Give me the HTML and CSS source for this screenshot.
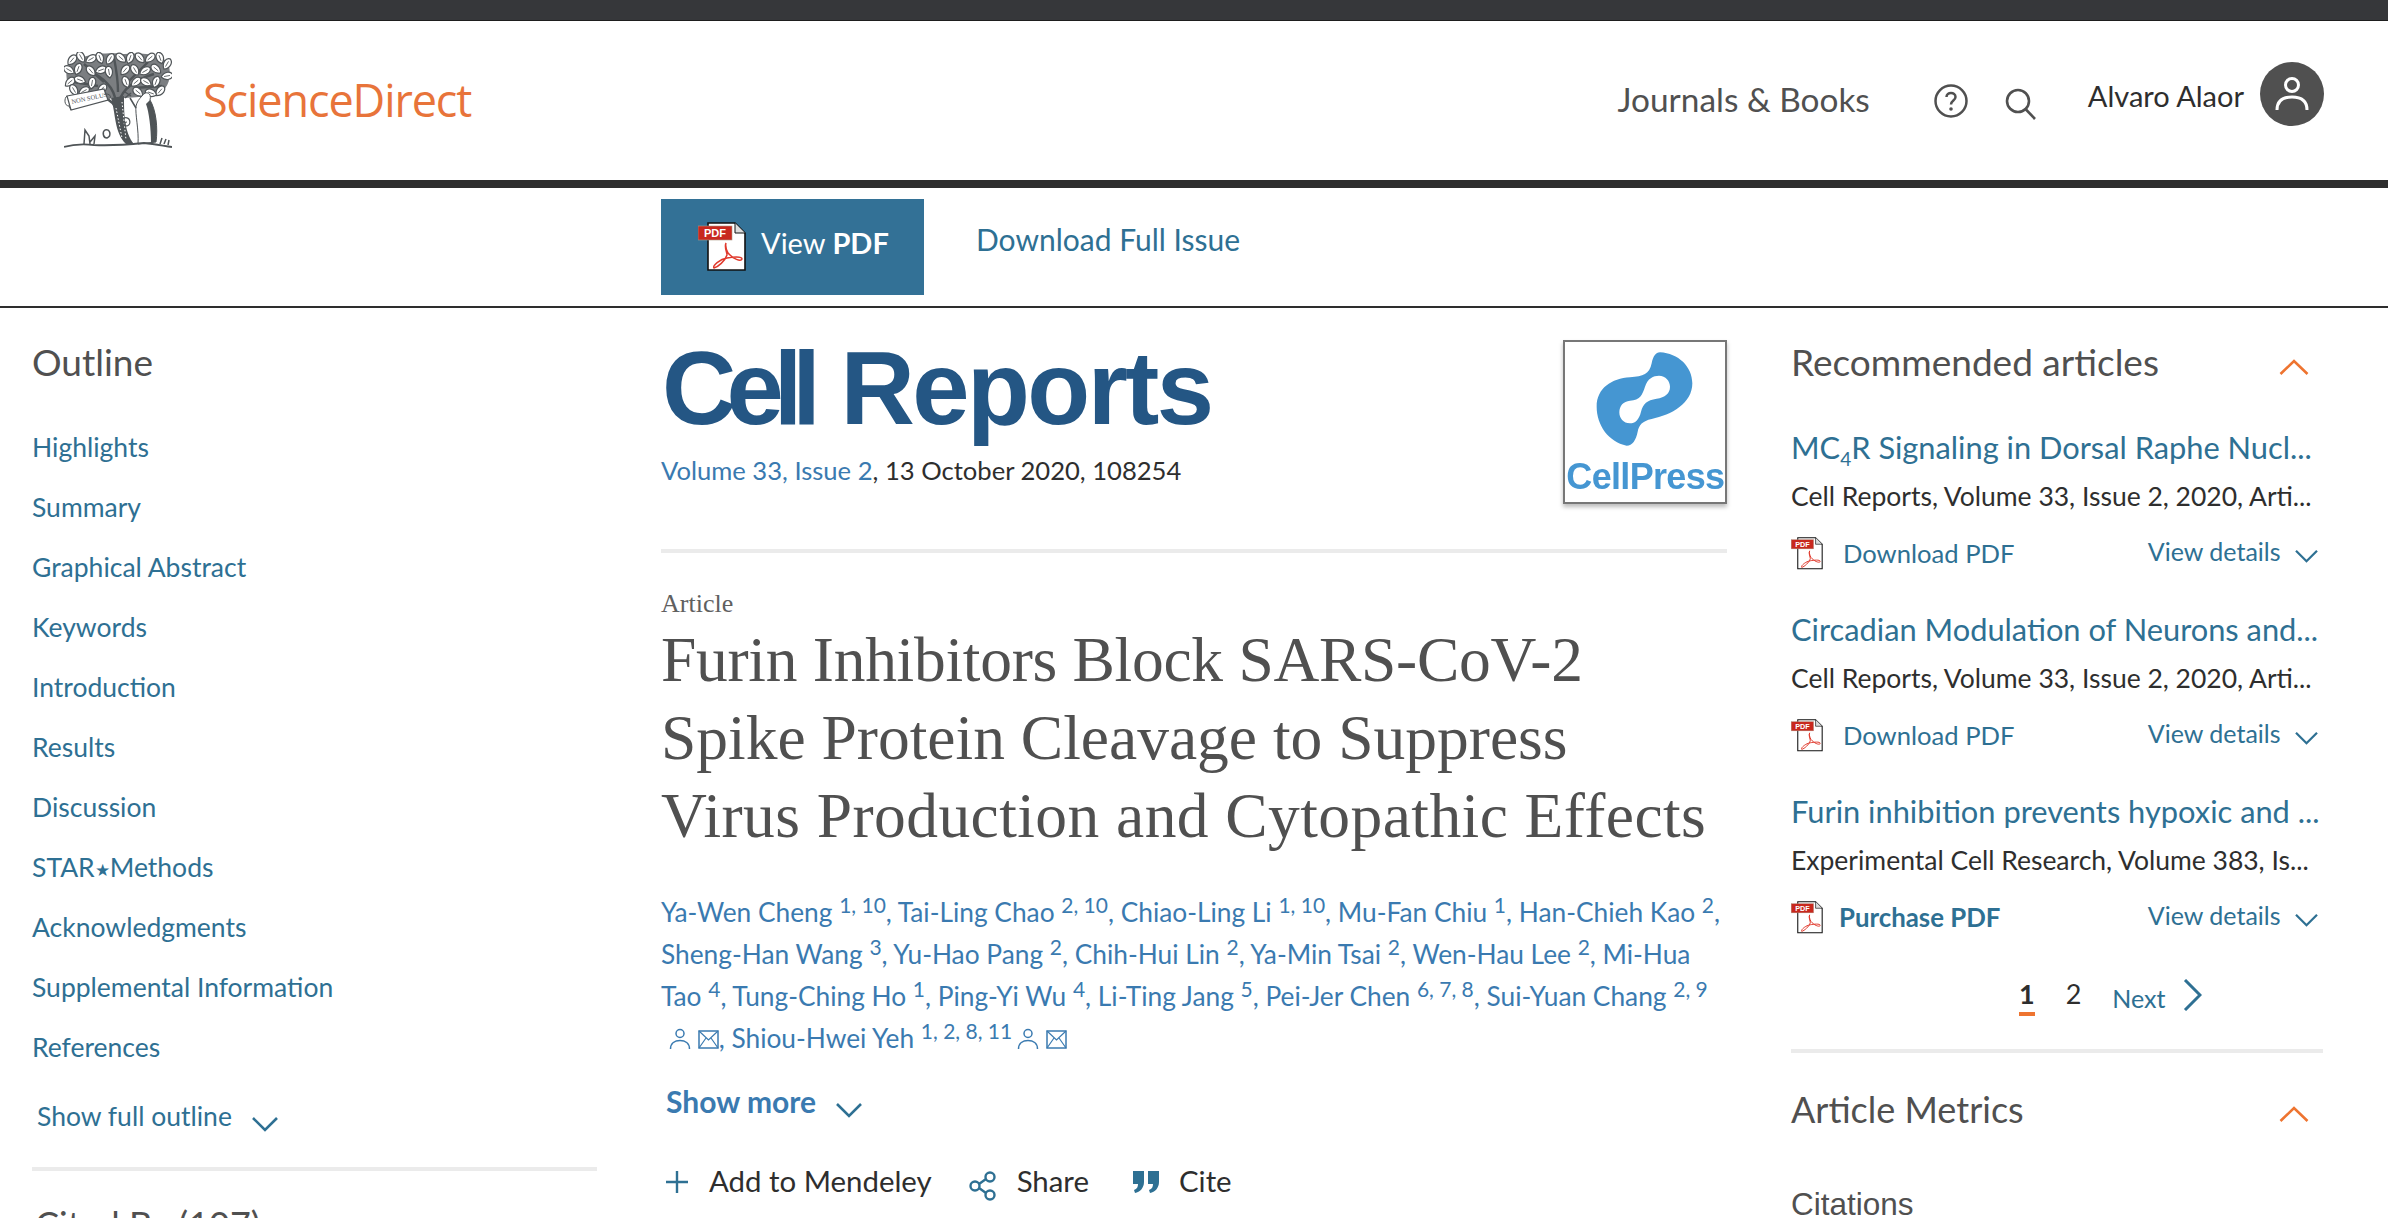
FILE: index.html
```html
<!DOCTYPE html>
<html lang="en">
<head>
<meta charset="utf-8">
<title>Furin Inhibitors Block SARS-CoV-2 Spike Protein Cleavage - ScienceDirect</title>
<link rel="stylesheet" href="styles.css">
</head>
<body>
<svg class="defs" width="0" height="0">
  <defs>
    <symbol id="pdf" viewBox="0 0 48 50">
      <path d="M10 1H37L47 11V48H10Z" fill="#fff" stroke="#111" stroke-width="1.6"/>
      <path d="M37 1V11H47" fill="#ddd" stroke="#111" stroke-width="1"/>
      <rect x="0" y="4" width="34" height="14" fill="#c8281e" stroke="#a98" stroke-width=".6"/>
      <text x="17" y="15" class="pdf-tag">PDF</text>
      <path d="M28 21C26 25 29 30 29 33C27 39 20 45 16 46C14 44 22 37 29 36C34 35 44 34 44 37C43 40 35 37 30 31C28 27 27 24 28 21Z" fill="none" stroke="#e0392c" stroke-width="1.5"/>
    </symbol>
    <symbol id="down" viewBox="0 0 28 16"><path d="M2 2L14 14L26 2" fill="none" stroke="#2e7093" stroke-width="2.6"/></symbol>
    <symbol id="up" viewBox="0 0 30 16"><path d="M1.5 15L15 2L28.500 15" fill="none" stroke="#ee7430" stroke-width="2.6"/></symbol>
    <symbol id="person" viewBox="0 0 22 22"><circle cx="11" cy="5.500" r="4" fill="none" stroke="#3a7ab0" stroke-width="1.500"/><path d="M1.500 21C1.500 15 6 12.500 11 12.500S20.500 15 20.500 21" fill="none" stroke="#3a7ab0" stroke-width="1.500"/></symbol>
    <symbol id="mail" viewBox="0 0 21 19"><rect x="1" y="1" width="19" height="17" fill="none" stroke="#3a7ab0" stroke-width="1.500"/><path d="M1 1L10.500 10L20 1M1 18L8 8M20 18L13 8" fill="none" stroke="#3a7ab0" stroke-width="1.200"/></symbol>
    <g id="lf"><path d="M0-6C4-5 5.500 1.500 0 6C-5.500 1.500-4-5 0-6Z" fill="#fff" stroke="#4f5457" stroke-width="1.200"/><path d="M0-3V3" stroke="#4f5457" stroke-width=".8"/></g>
  </defs>
</svg>

<div class="topbar"></div>

<header class="site-header">
  <a class="brand">
    <svg class="tree" viewBox="0 0 108 96" width="108" height="96" role="img" aria-label="Elsevier tree logo">
      <path d="M4 14C14 2 44 0 60 2C84 0 102 3 105 14C108 28 103 42 86 44C66 46 40 48 18 43C6 40-1 28 4 14Z" fill="#7b7e81"/>
      <path d="M53 58C52 40 46 30 28 20M55 50C58 38 70 28 90 22M54 40C54 28 52 16 50 6M30 42C40 44 48 48 52 56M20 12L40 30M84 10L64 30M10 30L34 34M98 34L70 36" fill="none" stroke="#4f5457" stroke-width="2.400"/>
      <use href="#lf" transform="translate(8 8) rotate(40)"/><use href="#lf" transform="translate(17 5) rotate(-30)"/><use href="#lf" transform="translate(27 7) rotate(60)"/><use href="#lf" transform="translate(36 6) rotate(-20)"/><use href="#lf" transform="translate(46 7) rotate(30)"/><use href="#lf" transform="translate(57 6) rotate(-50)"/><use href="#lf" transform="translate(66 6) rotate(20)"/><use href="#lf" transform="translate(76 6) rotate(-40)"/><use href="#lf" transform="translate(86 6) rotate(50)"/><use href="#lf" transform="translate(96 6) rotate(-20)"/><use href="#lf" transform="translate(103 12) rotate(30)"/>
      <use href="#lf" transform="translate(5 18) rotate(-60)"/><use href="#lf" transform="translate(14 17) rotate(20)"/><use href="#lf" transform="translate(27 19) rotate(-40)"/><use href="#lf" transform="translate(37 18) rotate(70)"/><use href="#lf" transform="translate(45 20) rotate(-10)"/><use href="#lf" transform="translate(61 18) rotate(40)"/><use href="#lf" transform="translate(71 18) rotate(-30)"/><use href="#lf" transform="translate(81 19) rotate(60)"/><use href="#lf" transform="translate(92 17) rotate(-50)"/><use href="#lf" transform="translate(103 24) rotate(80)"/>
      <use href="#lf" transform="translate(6 30) rotate(50)"/><use href="#lf" transform="translate(16 28) rotate(-70)"/><use href="#lf" transform="translate(28 31) rotate(10)"/><use href="#lf" transform="translate(62 30) rotate(-20)"/><use href="#lf" transform="translate(72 30) rotate(50)"/><use href="#lf" transform="translate(82 30) rotate(-60)"/><use href="#lf" transform="translate(92 30) rotate(20)"/>
      <use href="#lf" transform="translate(10 38) rotate(-30)"/><use href="#lf" transform="translate(20 39) rotate(60)"/><use href="#lf" transform="translate(38 37) rotate(40)"/><use href="#lf" transform="translate(74 40) rotate(-50)"/><use href="#lf" transform="translate(96 39) rotate(40)"/><use href="#lf" transform="translate(87 41) rotate(-70)"/>
      <path d="M47 46C52 62 50 80 62 92L70 92C60 80 60 60 60 44Z" fill="#4f5457"/>
      <path d="M58 50L62 88M52 56L58 86" fill="none" stroke="#fff" stroke-width="1" stroke-dasharray="1.500 2"/>
      <path d="M3 44L40 37L44 48L7 58Z" fill="#fff" stroke="#4f5457" stroke-width="1.200"/>
      <path d="M3 44C0 46 0 54 5 54L7 58M44 48C48 46 47 42 42 42" fill="none" stroke="#4f5457" stroke-width="1"/>
      <text x="8" y="52" transform="rotate(-12 8 52)" class="tree-motto">NON SOLUS</text>
      <path d="M78 44C82 38 88 41 86 48C92 58 94 76 92 90L74 92C75 78 71 62 72 54C73 50 75 47 78 44Z" fill="#fff" stroke="#4f5457" stroke-width="1"/>
      <path d="M86 48C92 58 94 76 92 90L87 91C87 76 85 60 82 52Z" fill="#4f5457"/>
      <path d="M72 56L66 46M61 40L67 44M61 46L67 41" fill="none" stroke="#4f5457" stroke-width="1.500"/>
      <path d="M60 66C66 64 68 72 63 74C60 74 60 70 63 70" fill="none" stroke="#4f5457" stroke-width="1.200"/>
      <path d="M0 95C10 92 20 92 30 93C50 94 70 92 80 91C92 92 100 94 108 95" fill="none" stroke="#4f5457" stroke-width="1.800"/>
      <path d="M20 92L21 78L25 84L26 92M26 90L31 84L30 92M41 78C46 76 48 84 43 86C39 86 38 80 41 78ZM96 92L98 86M100 92L102 87M104 93L105 88" fill="none" stroke="#4f5457" stroke-width="1.500"/>
    </svg>
    <span class="brand-name">ScienceDirect</span>
  </a>
  <nav class="site-nav">
    <a class="nav-journals">Journals &amp; Books</a>
    <svg class="icon-help" viewBox="0 0 34 34" width="34" height="34"><circle cx="17" cy="17" r="15.500" fill="none" stroke="#505050" stroke-width="2.500"/><path d="M12.500 13C12.500 7.500 21.500 7.500 21.500 13C21.500 16.500 17 16.500 17 20.500" fill="none" stroke="#505050" stroke-width="2.500"/><circle cx="17" cy="25" r="1.800" fill="#505050"/></svg>
    <svg class="icon-search" viewBox="0 0 32 32" width="32" height="32"><circle cx="13" cy="13" r="11" fill="none" stroke="#505050" stroke-width="2.600"/><path d="M20.500 21L30 31" stroke="#505050" stroke-width="2.600"/></svg>
    <a class="nav-user">Alvaro Alaor</a>
    <span class="avatar"><svg viewBox="0 0 64 64" width="64" height="64"><circle cx="32" cy="23" r="6.500" fill="none" stroke="#fff" stroke-width="3"/><path d="M17 48C17 38 24 35 32 35S47 38 47 48" fill="none" stroke="#fff" stroke-width="3"/></svg></span>
  </nav>
</header>

<div class="toolbar">
  <a class="btn-pdf"><svg class="btn-pdf-icon" width="48" height="50"><use href="#pdf"/></svg><span class="btn-pdf-label">View <b>PDF</b></span></a>
  <a class="toolbar-link">Download Full Issue</a>
</div>

<main class="layout">
  <aside class="outline">
    <h2 class="side-title">Outline</h2>
    <ul class="outline-list">
      <li>Highlights</li>
      <li>Summary</li>
      <li>Graphical Abstract</li>
      <li>Keywords</li>
      <li>Introduction</li>
      <li>Results</li>
      <li>Discussion</li>
      <li>STAR<span class="star">★</span>Methods</li>
      <li>Acknowledgments</li>
      <li>Supplemental Information</li>
      <li>References</li>
    </ul>
    <a class="show-outline">Show full outline <svg class="chev-outline" width="28" height="16"><use href="#down"/></svg></a>
    <hr class="rule rule-outline">
    <h2 class="side-title cited">Cited By (107)</h2>
  </aside>

  <article class="article">
    <div class="journal">
      <div class="journal-info">
        <div class="journal-name"><span class="jn-cell">Cell</span> <span class="jn-reports">Reports</span></div>
        <p class="journal-issue"><a>Volume 33, Issue 2</a>, 13 October 2020, 108254</p>
      </div>
      <svg class="cover" viewBox="24 15 492 492" width="164" height="164" role="img" aria-label="Cell Press">
        <rect x="27" y="18" width="486" height="486" fill="#fff" stroke="#777" stroke-width="6"/>
        <path fill="#4596d2" fill-rule="evenodd" d="M315 52C370 55 412 95 412 145C412 205 350 240 290 252C262 258 252 270 248 290C243 315 232 332 215 332C160 320 125 270 125 215C125 160 170 130 225 127C265 124 283 118 290 85C294 65 302 52 315 52ZM225 197C255 195 262 180 270 155C278 130 295 122 312 122C332 122 345 138 345 155C345 175 330 187 305 191C275 196 265 205 258 230C252 255 240 265 225 265C205 265 193 250 193 232C193 212 205 199 225 197Z"/>
        <text x="34" y="462" class="cover-text">CellPress</text>
      </svg>
    </div>
    <hr class="rule rule-journal">
    <div class="article-type">Article</div>
    <h1 class="title"><span class="title-a">Furin Inhibitors Block SARS-CoV-2</span><br>Spike Protein Cleavage to Suppress<br><span class="title-c">Virus Production and Cytopathic Effects</span></h1>
    <p class="authors">Ya-Wen Cheng <sup>1, 10</sup>, Tai-Ling Chao <sup>2, 10</sup>, Chiao-Ling Li <sup>1, 10</sup>, Mu-Fan Chiu <sup>1</sup>, Han-Chieh Kao <sup>2</sup>,<br>Sheng-Han Wang <sup>3</sup>, Yu-Hao Pang <sup>2</sup>, Chih-Hui Lin <sup>2</sup>, Ya-Min Tsai <sup>2</sup>, Wen-Hau Lee <sup>2</sup>, Mi-Hua<br>Tao <sup>4</sup>, Tung-Ching Ho <sup>1</sup>, Ping-Yi Wu <sup>4</sup>, Li-Ting Jang <sup>5</sup>, Pei-Jer Chen <sup>6, 7, 8</sup>, Sui-Yuan Chang <sup>2, 9</sup><br><svg class="a-person a-first" width="22" height="22"><use href="#person"/></svg> <svg class="a-mail" width="21" height="19"><use href="#mail"/></svg>, Shiou-Hwei Yeh <sup>1, 2, 8, 11</sup> <svg class="a-person a-second" width="22" height="22"><use href="#person"/></svg> <svg class="a-mail" width="21" height="19"><use href="#mail"/></svg></p>
    <a class="show-more">Show more <svg class="chev-more" width="28" height="16"><use href="#down"/></svg></a>
    <div class="actions">
      <a class="action action-add"><svg width="22" height="22" viewBox="0 0 22 22"><path d="M11 0V22M0 11H22" stroke="#2e7093" stroke-width="2.400"/></svg>Add to Mendeley</a>
      <a class="action action-share"><svg width="28" height="30" viewBox="0 0 28 30"><circle cx="21" cy="6" r="4.500" fill="none" stroke="#2e7093" stroke-width="2.400"/><circle cx="6" cy="15" r="4.500" fill="none" stroke="#2e7093" stroke-width="2.400"/><circle cx="21" cy="24" r="4.500" fill="none" stroke="#2e7093" stroke-width="2.400"/><path d="M10 13L17 8M10 17L17 22" stroke="#2e7093" stroke-width="2.400"/></svg>Share</a>
      <a class="action action-cite"><svg width="26" height="22" viewBox="0 0 26 22"><path d="M0 0H11V11C11 17 7 21 2 22L1 19C4 18 5 16 5 13H0ZM15 0H26V11C26 17 22 21 17 22L16 19C19 18 20 16 20 13H15Z" fill="#2e7093"/></svg>Cite</a>
    </div>
  </article>

  <aside class="recs">
    <div class="rec-head"><h2 class="side-title">Recommended articles</h2><svg class="chev-up" width="30" height="16"><use href="#up"/></svg></div>
    <section class="rec">
      <a class="rec-title">MC<sub>4</sub>R Signaling in Dorsal Raphe Nucl...</a>
      <p class="rec-meta">Cell Reports, Volume 33, Issue 2, 2020, Arti...</p>
      <div class="rec-row"><a class="rec-dl"><svg class="rec-pdf" width="32" height="33"><use href="#pdf"/></svg>Download PDF</a><a class="rec-view">View details <svg width="25" height="14"><use href="#down"/></svg></a></div>
    </section>
    <section class="rec">
      <a class="rec-title">Circadian Modulation of Neurons and...</a>
      <p class="rec-meta">Cell Reports, Volume 33, Issue 2, 2020, Arti...</p>
      <div class="rec-row"><a class="rec-dl"><svg class="rec-pdf" width="32" height="33"><use href="#pdf"/></svg>Download PDF</a><a class="rec-view">View details <svg width="25" height="14"><use href="#down"/></svg></a></div>
    </section>
    <section class="rec">
      <a class="rec-title">Furin inhibition prevents hypoxic and ...</a>
      <p class="rec-meta">Experimental Cell Research, Volume 383, Is...</p>
      <div class="rec-row"><a class="rec-dl rec-buy"><svg class="rec-pdf" width="32" height="33"><use href="#pdf"/></svg>Purchase PDF</a><a class="rec-view">View details <svg width="25" height="14"><use href="#down"/></svg></a></div>
    </section>
    <div class="pager"><span class="page-current">1</span><span class="page-num">2</span><a class="page-next">Next</a><svg width="19" height="32" viewBox="0 0 19 32"><path d="M2 1L17 16L2 31" fill="none" stroke="#2e7093" stroke-width="3"/></svg></div>
    <hr class="rule rule-rec">
    <div class="rec-head metrics-head"><h2 class="side-title metrics-title">Article Metrics</h2><svg class="chev-up" width="30" height="16"><use href="#up"/></svg></div>
    <div class="citations">Citations</div>
  </aside>
</main>
</body>
</html>
```

FILE: styles.css
```css
* { box-sizing: border-box; }
html, body { margin: 0; height: 100%; }
body {
  height: 1218px;
  overflow: hidden;
  background: #fff;
  color: #2e2e2e;
  font-family: Lato, "Open Sans", sans-serif;
}
a { color: inherit; text-decoration: none; }
p, h1, h2, ul { margin: 0; padding: 0; font-weight: 400; }
.defs { position: absolute; }
.pdf-tag { font: 700 11px "Liberation Sans", sans-serif; fill: #fff; text-anchor: middle; }
.tree-motto { font: 6.5px "Liberation Serif", serif; fill: #4f5457; }
.cover-text { font: 700 108px "Liberation Sans", sans-serif; fill: #4596d2; letter-spacing: -2px; }

.topbar { height: 21px; background: #36373a; border-bottom: 1px solid #1e1e1e; }

.site-header {
  height: 159px;
  display: flex;
  justify-content: space-between;
  padding: 31px 64px 0 64px;
}
.brand { display: flex; align-items: flex-start; gap: 31px; }
.tree { flex: none; }
.brand-name {
  font: 400 45px/1 "Open Sans", sans-serif;
  color: #e8743a;
  margin-top: 25px;
  letter-spacing: -1.1px;
}
.site-nav { display: flex; align-items: flex-start; }
.nav-journals { font-size: 33.4px; line-height: 42px; color: #505050; margin-top: 26px; }
.icon-help { margin: 32px 0 0 64px; }
.icon-search { margin: 36px 0 0 37px; }
.nav-user { font-size: 29px; line-height: 36px; margin: 26px 0 0 51px; color: #2e2e2e; }
.avatar {
  width: 64px; height: 64px; border-radius: 50%; background: #505050;
  margin: 10px 0 0 16px; display: block;
}
.avatar svg { display: block; }

.toolbar {
  height: 128px;
  border-top: 8px solid #2e2e2e;
  border-bottom: 2px solid #2e2e2e;
  padding: 11px 0 0 661px;
  display: flex;
  align-items: flex-start;
}
.btn-pdf {
  width: 263px; height: 96px; background: #337196; color: #fff;
  display: flex; align-items: center; padding-left: 37px; gap: 15px;
  font-size: 29px;
}
.btn-pdf-icon { flex: none; }
.btn-pdf-label { margin-top: -10px; }
.toolbar-link { color: #2e7093; font-size: 30px; margin: 21px 0 0 52px; line-height: 38px; }

.layout {
  display: grid;
  grid-template-columns: 565px 1066px 532px;
  column-gap: 64px;
  padding-left: 32px;
  align-items: start;
}
.side-title { font-size: 37px; line-height: 44px; color: #505050; }
.metrics-title { font-size: 36px; }

.outline { padding-top: 32px; }
.outline-list { list-style: none; margin-top: 33px; }
.outline-list li { font-size: 26.5px; line-height: 60px; color: #2e7093; }
.star { font-size: 17px; line-height: 0; vertical-align: 1px; }
.show-outline { display: block; margin: 9px 0 0 5px; font-size: 26.5px; line-height: 60px; color: #2e7093; }
.chev-outline { margin-left: 12px; vertical-align: -6px; }
.rule { border: 0; height: 4px; background: #ebebeb; margin: 0; }
.rule-outline { margin-top: 21px; }
.cited { margin-top: 31px; padding-left: 3px; font-size: 36px; }

.journal { display: flex; justify-content: space-between; align-items: flex-start; padding-top: 32px; }
.journal-name {
  font: 700 103px/110px "Liberation Sans", sans-serif;
  color: #245684;
  margin: -6px 0 0 1px;
  white-space: nowrap;
}
.jn-cell { letter-spacing: -10px; margin-right: 1px; }
.jn-reports { letter-spacing: -2.6px; }
.journal-issue { font-size: 25.6px; line-height: 36px; color: #2e2e2e; margin-top: 8px; }
.journal-issue a { color: #3a7ab0; }
.cover { display: block; filter: drop-shadow(0 3px 2px #bbb); }
.rule-journal { margin-top: 45px; }
.article-type { font: 26px/30px "Liberation Serif", serif; color: #606060; margin-top: 36px; }
.title {
  font: 400 63.5px/78px "Liberation Serif", serif;
  color: #505050;
  white-space: nowrap;
  margin-top: 2px;
}
.title-a { letter-spacing: -.28px; }
.title-c { letter-spacing: .43px; }
.authors { font-size: 26.3px; line-height: 42px; color: #3a7ab0; margin-top: 36px; white-space: nowrap; }
.authors sup { font-size: 21px; line-height: 0; vertical-align: 9px; }
.a-person { vertical-align: -2px; }
.a-first { margin-left: 8px; }
.a-second { margin-left: -2px; }
.a-mail { vertical-align: -1px; }
.show-more { display: block; font-size: 30px; line-height: 40px; font-weight: 700; color: #3a7ab0; margin: 22px 0 0 5px; }
.chev-more { margin-left: 12px; vertical-align: -5px; }
.actions { display: flex; margin-top: 40px; align-items: flex-start; }
.action { display: flex; align-items: flex-start; font-size: 29.4px; line-height: 40px; color: #2e2e2e; }
.action svg { flex: none; margin-top: 10px; }
.action-add { padding-left: 5px; gap: 21px; }
.action-share { margin-left: 37px; gap: 20px; }
.action-cite { margin-left: 44px; gap: 20px; }

.recs { padding-top: 32px; }
.rec-head { display: flex; justify-content: space-between; align-items: flex-start; padding-right: 14px; }
.chev-up { margin-top: 19px; }
.rec { height: 182px; }
.rec-head + .rec { margin-top: 45px; }
.rec-title { display: block; font-size: 30.8px; line-height: 38px; color: #2e7093; white-space: nowrap; }
.rec-title sub { font-size: 19px; line-height: 0; }
.rec-meta { font-size: 26.5px; line-height: 36px; color: #2e2e2e; margin-top: 11px; white-space: nowrap; }
.rec-row { display: flex; justify-content: space-between; margin-top: 21px; padding-right: 4px; }
.rec-dl { display: flex; align-items: center; gap: 20px; font-size: 25.6px; line-height: 36px; color: #2e7093; }
.rec-buy { font-weight: 700; gap: 16px; font-size: 25.8px; }
.rec-pdf { flex: none; }
.rec-view { font-size: 25px; line-height: 36px; color: #2e7093; margin-top: -2px; }
.rec-view svg { margin-left: 7px; vertical-align: -2px; }
.pager { display: flex; align-items: flex-start; padding-left: 228px; margin-top: 1px; }
.page-current { font-size: 27px; line-height: 36px; font-weight: 700; border-bottom: 4px solid #ee7430; height: 40px; }
.page-num { font-size: 27px; line-height: 36px; margin-left: 31px; }
.page-next { font-size: 25px; line-height: 36px; color: #2e7093; margin: 4px 0 0 31px; }
.pager svg { margin: 3px 0 0 17px; }
.rule-rec { margin-top: 33px; }
.metrics-head { margin-top: 34px; }
.citations { font: 31.5px/36px "Liberation Sans", sans-serif; color: #505050; margin-top: 55px; }
```
